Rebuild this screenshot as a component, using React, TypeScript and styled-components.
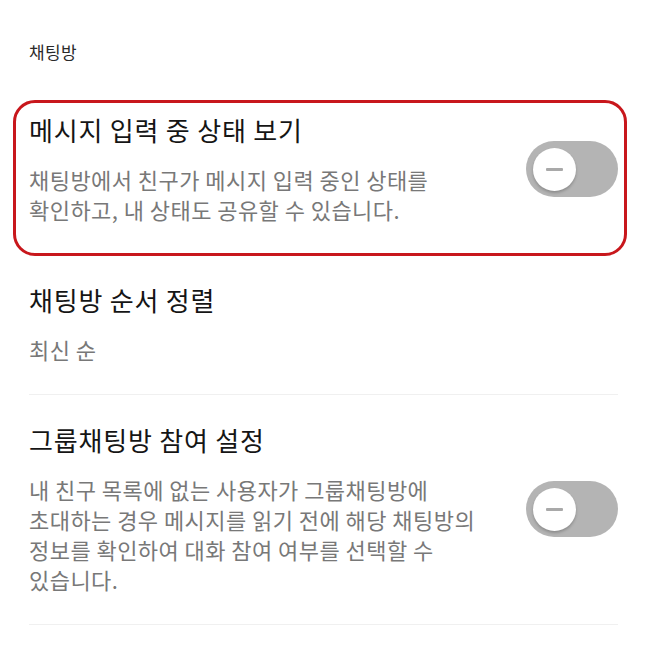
import React from "react";
import styled, { createGlobalStyle } from "styled-components";

const GlobalStyle = createGlobalStyle`
  html, body {
    margin: 0;
    padding: 0;
    background: #ffffff;
  }
  body {
    font-family: "Noto Sans CJK KR", "Noto Sans", sans-serif;
    -webkit-font-smoothing: antialiased;
  }
`;

const Page = styled.div`
  width: 648px;
  min-height: 648px;
  box-sizing: border-box;
  padding: 40px 30px 0 29px;
  background: #ffffff;
`;

const SectionHeader = styled.div`
  font-size: 17px;
  line-height: 24px;
  color: #2a2a2a;
  letter-spacing: 0.3px;
  margin-bottom: 21px;
`;

const List = styled.div`
  display: flex;
  flex-direction: column;
`;

const Item = styled.div<{ $divider?: boolean; $highlight?: boolean }>`
  position: relative;
  display: flex;
  align-items: center;
  gap: 24px;
  padding: 29px 0 30px;
  border-bottom: 1px solid ${(p) => (p.$divider ? "#f0f0f0" : "transparent")};

  ${(p) =>
    p.$highlight &&
    `
    &::after {
      content: "";
      position: absolute;
      left: -16px;
      right: -9px;
      top: 15px;
      bottom: -2px;
      border: 3.5px solid #c8171c;
      border-radius: 22px;
      pointer-events: none;
    }
  `}
`;

const TextBlock = styled.div`
  flex: 1;
  min-width: 0;
  display: flex;
  flex-direction: column;
`;

const Title = styled.div`
  font-size: 26px;
  line-height: 32px;
  letter-spacing: 0.8px;
  color: #151515;
  margin-bottom: 18px;
  white-space: nowrap;
`;

const Description = styled.div`
  font-size: 22px;
  line-height: 30px;
  letter-spacing: 0.45px;
  color: #787878;
  white-space: nowrap;
`;

const Track = styled.div`
  flex: none;
  width: 92px;
  height: 56px;
  border-radius: 28px;
  background: #b4b4b4;
  display: flex;
  align-items: center;
  padding-left: 7px;
  box-sizing: border-box;
`;

const Knob = styled.div`
  width: 43px;
  height: 43px;
  border-radius: 50%;
  background: #ffffff;
  box-shadow: 0 2px 3px rgba(0, 0, 0, 0.22);
  display: flex;
  align-items: center;
  justify-content: center;
`;

const Dash = styled.div`
  width: 17px;
  height: 3px;
  border-radius: 1px;
  background: #a9a9a9;
`;

function Toggle() {
  return (
    <Track>
      <Knob>
        <Dash />
      </Knob>
    </Track>
  );
}

export default function App() {
  return (
    <>
      <GlobalStyle />
      <Page>
        <SectionHeader>채팅방</SectionHeader>
        <List>
          <Item $highlight>
            <TextBlock>
              <Title>메시지 입력 중 상태 보기</Title>
              <Description>
                채팅방에서 친구가 메시지 입력 중인 상태를
                <br />
                확인하고, 내 상태도 공유할 수 있습니다.
              </Description>
            </TextBlock>
            <Toggle />
          </Item>
          <Item $divider>
            <TextBlock>
              <Title>채팅방 순서 정렬</Title>
              <Description>최신 순</Description>
            </TextBlock>
          </Item>
          <Item $divider>
            <TextBlock>
              <Title>그룹채팅방 참여 설정</Title>
              <Description>
                내 친구 목록에 없는 사용자가 그룹채팅방에
                <br />
                초대하는 경우 메시지를 읽기 전에 해당 채팅방의
                <br />
                정보를 확인하여 대화 참여 여부를 선택할 수
                <br />
                있습니다.
              </Description>
            </TextBlock>
            <Toggle />
          </Item>
        </List>
      </Page>
    </>
  );
}
